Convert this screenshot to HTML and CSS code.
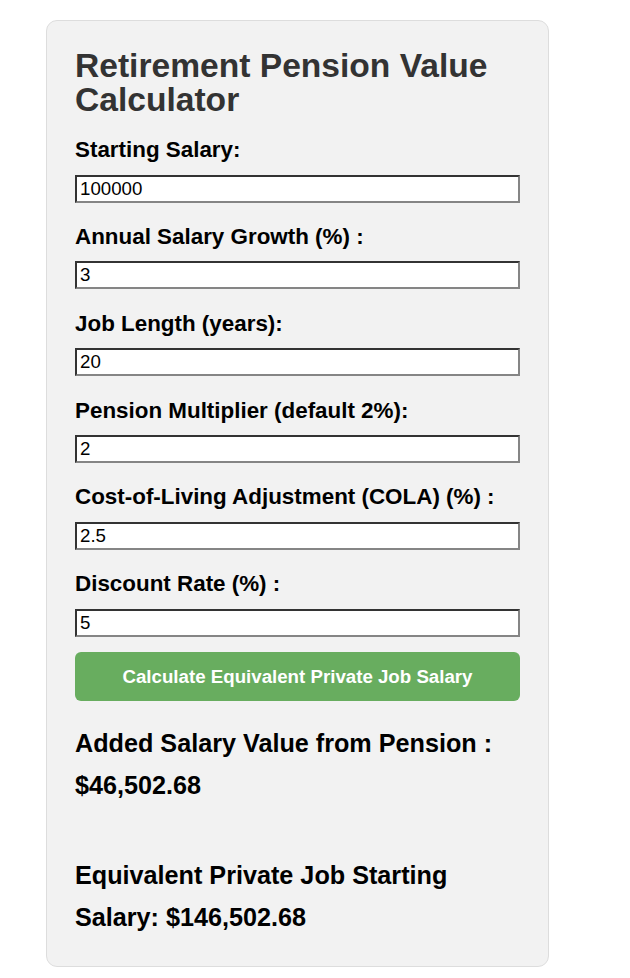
FILE: index.html
```html
<!DOCTYPE html>
<html lang="en">
<head>
    <meta charset="UTF-8">
    <meta name="viewport" content="width=device-width, initial-scale=1.0">
    <title>Retirement Pension Value Calculator</title>
    <link rel="stylesheet" href="styles.css">
</head>
<body>
    <div class="calculator">
        <h1>Retirement Pension Value Calculator</h1>
        <div class="fields">
            <div class="field">
                <label for="salary">Starting Salary:</label>
                <input type="text" id="salary" value="100000">
            </div>
            <div class="field">
                <label for="growth">Annual Salary Growth (%) :</label>
                <input type="text" id="growth" value="3">
            </div>
            <div class="field">
                <label for="years">Job Length (years):</label>
                <input type="text" id="years" value="20">
            </div>
            <div class="field">
                <label for="multiplier">Pension Multiplier (default 2%):</label>
                <input type="text" id="multiplier" value="2">
            </div>
            <div class="field">
                <label for="cola">Cost-of-Living Adjustment (COLA) (%) :</label>
                <input type="text" id="cola" value="2.5">
            </div>
            <div class="field">
                <label for="discount">Discount Rate (%) :</label>
                <input type="text" id="discount" value="5">
            </div>
        </div>
        <button class="calc-button">Calculate Equivalent Private Job Salary</button>
        <div class="result">Added Salary Value from Pension : $46,502.68</div>
        <div class="result">Equivalent Private Job Starting Salary: $146,502.68</div>
    </div>
</body>
</html>
```

FILE: styles.css
```css
body { font-family: "Liberation Sans", Arial, sans-serif; margin: 0; padding: 0; background-color: #fff; color: #000; }
.calculator { width: 445px; margin: 20px 0 0 46px; padding: 28px; border: 1px solid #ddd; border-radius: 11px; background-color: #f2f2f2; }
h1 { font-size: 33.6px; color: #333; margin: 0 0 21px; line-height: 33.6px; }
.fields { margin-bottom: 15px; }
.field { margin-bottom: 21.3px; }
.field:last-child { margin-bottom: 0; }
.field label { display: block; font-size: 22.4px; font-weight: bold; line-height: 26px; margin-bottom: 11.5px; }
.field input { display: block; box-sizing: border-box; width: 100%; height: 28px; margin: 0; padding: 1px 3px; font-family: "Liberation Sans", Arial, sans-serif; font-size: 18.7px; border: 2px solid; border-color: #333 #858585 #858585 #333; background-color: #fff; color: #000; }
.calc-button { display: block; width: 100%; padding: 14px; border: none; border-radius: 6px; background-color: #68ad5f; color: #fff; font-family: "Liberation Sans", Arial, sans-serif; font-size: 18.7px; font-weight: bold; line-height: 21px; cursor: pointer; }
.result { font-size: 25.2px; font-weight: bold; line-height: 42px; margin-top: 47.6px; }
.calc-button + .result { margin-top: 21.4px; }
```
